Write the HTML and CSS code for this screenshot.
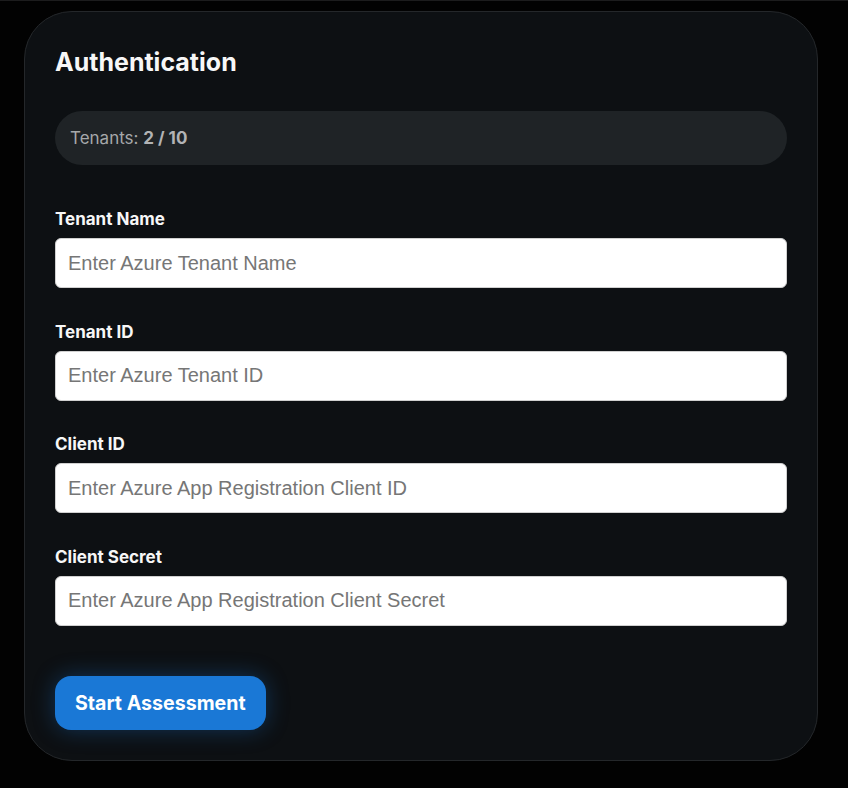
FILE: index.html
```html
<!DOCTYPE html>
<html lang="en">
<head>
<meta charset="utf-8">
<title>Authentication</title>
<link rel="stylesheet" href="styles.css">
</head>
<body>
<main class="page">
  <section class="card">
    <h2 class="title">Authentication</h2>
    <div class="pill">Tenants: <strong>2 / 10</strong></div>
    <form class="form">
      <div class="field">
        <label class="label" for="tn">Tenant Name</label>
        <input class="input" id="tn" type="text" placeholder="Enter Azure Tenant Name">
      </div>
      <div class="field">
        <label class="label" for="tid">Tenant ID</label>
        <input class="input" id="tid" type="text" placeholder="Enter Azure Tenant ID">
      </div>
      <div class="field">
        <label class="label" for="cid">Client ID</label>
        <input class="input" id="cid" type="text" placeholder="Enter Azure App Registration Client ID">
      </div>
      <div class="field">
        <label class="label" for="cs">Client Secret</label>
        <input class="input" id="cs" type="password" placeholder="Enter Azure App Registration Client Secret">
      </div>
      <button class="btn" type="button">Start Assessment</button>
    </form>
  </section>
</main>
</body>
</html>
```

FILE: styles.css
```css
html, body {
  margin: 0;
  padding: 0;
  background: #020202;
}
body {
  font-family: Inter, "Noto Sans", sans-serif;
  color: #f5f5f5;
  border-top: 1px solid #1c1c1d;
  min-height: 787px;
}
.page {
  padding: 10px 30px 0 24px;
}
.card {
  box-sizing: border-box;
  width: 794px;
  background: #0d1013;
  border: 1px solid #24272a;
  border-radius: 48px;
  padding: 30px 30px 30px 30px;
}
.title {
  margin: 0;
  font-size: 25px;
  line-height: 40px;
  font-weight: 700;
  color: #f7f7f7;
}
.pill {
  margin-top: 29px;
  height: 54px;
  box-sizing: border-box;
  border-radius: 27px;
  background: #1f2326;
  padding: 0 15px;
  display: flex;
  align-items: center;
  font-size: 17px;
  color: #a6a8aa;
  white-space: pre;
}
.pill strong {
  font-weight: 700;
  color: #b2b3b5;
}
.form {
  margin-top: 44px;
  display: flex;
  flex-direction: column;
  gap: 33.6px;
}
.field {
  display: flex;
  flex-direction: column;
  gap: 8px;
}
.label {
  font-size: 17px;
  line-height: 21px;
  font-weight: 700;
  color: #f7f7f7;
}
.input {
  box-sizing: border-box;
  height: 50px;
  width: 100%;
  margin: 0;
  border: 1px solid #d0d0d0;
  border-radius: 6px;
  background: #ffffff;
  padding: 0 12px;
  font-family: "Liberation Sans", Arial, sans-serif;
  font-size: 20px;
  color: #222;
  outline: none;
}
.input::placeholder {
  color: #767676;
}
.btn {
  align-self: flex-start;
  margin-top: 16.6px;
  height: 54px;
  padding: 0 20px;
  border: none;
  border-radius: 16px;
  background: #1a78d6;
  color: #ffffff;
  font-family: Inter, "Noto Sans", sans-serif;
  font-size: 19.6px;
  font-weight: 700;
  box-shadow: 0 0 22px rgba(26, 120, 214, 0.35);
  cursor: pointer;
}
```
